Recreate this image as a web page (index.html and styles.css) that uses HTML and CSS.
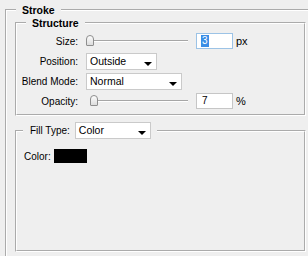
FILE: index.html
```html
<!DOCTYPE html>
<html lang="en">
<head>
  <meta charset="UTF-8" />
  <title>Stroke</title>
  <link rel="stylesheet" href="styles.css">
</head>
<body>
  <fieldset class="group outer">
    <legend class="title">Stroke</legend>

    <fieldset class="group structure">
      <legend class="title">Structure</legend>
      <div class="row">
        <label class="lbl">Size:</label>
        <div class="slider"><span class="thumb" style="left: 0px"></span></div>
        <div class="num focus"><span class="sel">3</span></div>
        <span class="unit">px</span>
      </div>
      <div class="row">
        <label class="lbl">Position:</label>
        <div class="select w-pos">Outside<span class="arrow"></span></div>
      </div>
      <div class="row">
        <label class="lbl">Blend Mode:</label>
        <div class="select w-blend">Normal<span class="arrow"></span></div>
      </div>
      <div class="row">
        <label class="lbl">Opacity:</label>
        <div class="slider"><span class="thumb" style="left: 4px"></span></div>
        <div class="num">7</div>
        <span class="unit">%</span>
      </div>
    </fieldset>

    <fieldset class="group fill">
      <legend class="fill-head">
        <label>Fill Type:</label>
        <div class="select w-fill">Color<span class="arrow"></span></div>
      </legend>
      <div class="fill-body">
        <div class="row color-row">
          <label>Color:</label>
          <span class="swatch"></span>
        </div>
      </div>
    </fieldset>
  </fieldset>
</body>
</html>
```

FILE: styles.css
```css
html, body {
  margin: 0;
  overflow: hidden;
}
body {
  background: #efefef;
  font-family: "Liberation Sans", Arial, sans-serif;
  font-size: 10px;
  color: #000;
  width: 308px;
  height: 256px;
}
.group {
  margin: 0;
  padding: 0;
  border: 2px groove #fff;
  min-width: 0;
}
.title {
  font-weight: bold;
  font-size: 10.5px;
  line-height: 14px;
  padding: 0 6px;
  margin-left: 9px;
}
.outer {
  box-sizing: border-box;
  height: 253px;
  margin: 3px 0 0 5px;
  padding: 0 0 0 8px;
  border-right: 0;
  border-bottom: 0;
}
.outer > .title {
  margin-left: 1px;
}
.structure {
  width: 287px;
  margin-top: -1px;
  padding: 1px 0 3px 0;
}
.row {
  display: flex;
  align-items: center;
  height: 20px;
}
.lbl {
  width: 61px;
  text-align: right;
  margin-right: 8px;
}
.slider {
  position: relative;
  width: 102px;
  height: 20px;
  margin-right: 8px;
}
.slider::before {
  content: "";
  position: absolute;
  left: 4px;
  right: 0;
  top: 9px;
  height: 1px;
  background: #a6a6a6;
  border-bottom: 1px solid #fff;
}
.thumb {
  position: absolute;
  top: 4px;
  width: 8px;
  height: 11px;
  border: 1px solid #8e8e8e;
  border-radius: 4px 4px 1px 1px;
  background: linear-gradient(#fdfdfd, #dcdcdc);
  box-sizing: border-box;
}
.num {
  width: 37px;
  height: 16px;
  box-sizing: border-box;
  background: #fff;
  border: 1px solid #c6c6c6;
  padding: 0 0 0 5px;
  line-height: 14px;
}
.num.focus {
  border-color: #9cc3e6;
}
.sel {
  display: inline-block;
  background: #3a8ee6;
  color: #fff;
  padding: 0 1px;
  margin-left: -1px;
  line-height: 12px;
  margin-top: 1px;
}
.unit {
  margin-left: 3px;
  font-size: 11px;
}
.select {
  position: relative;
  height: 17px;
  box-sizing: border-box;
  background: #fff;
  border: 1px solid #cacaca;
  padding-left: 3px;
  line-height: 15px;
  font-size: 10.5px;
}
.w-pos { width: 71px; }
.w-blend { width: 96px; }
.w-fill { width: 76px; }
.arrow {
  position: absolute;
  right: 4px;
  bottom: 3px;
  border-left: 4px solid transparent;
  border-right: 4px solid transparent;
  border-top: 4px solid #000;
}
.fill {
  width: 287px;
  margin-top: 6px;
  padding: 0;
}
.fill-head {
  display: flex;
  align-items: center;
  margin-left: 6px;
  padding: 0 6px 0 7px;
}
.fill-head label {
  margin-right: 5px;
}
.fill-body {
  height: 111px;
  padding: 7px 0 0 7px;
  box-sizing: border-box;
}
.color-row label {
  margin-right: 3px;
}
.swatch {
  width: 33px;
  height: 14px;
  background: #000;
}
```
